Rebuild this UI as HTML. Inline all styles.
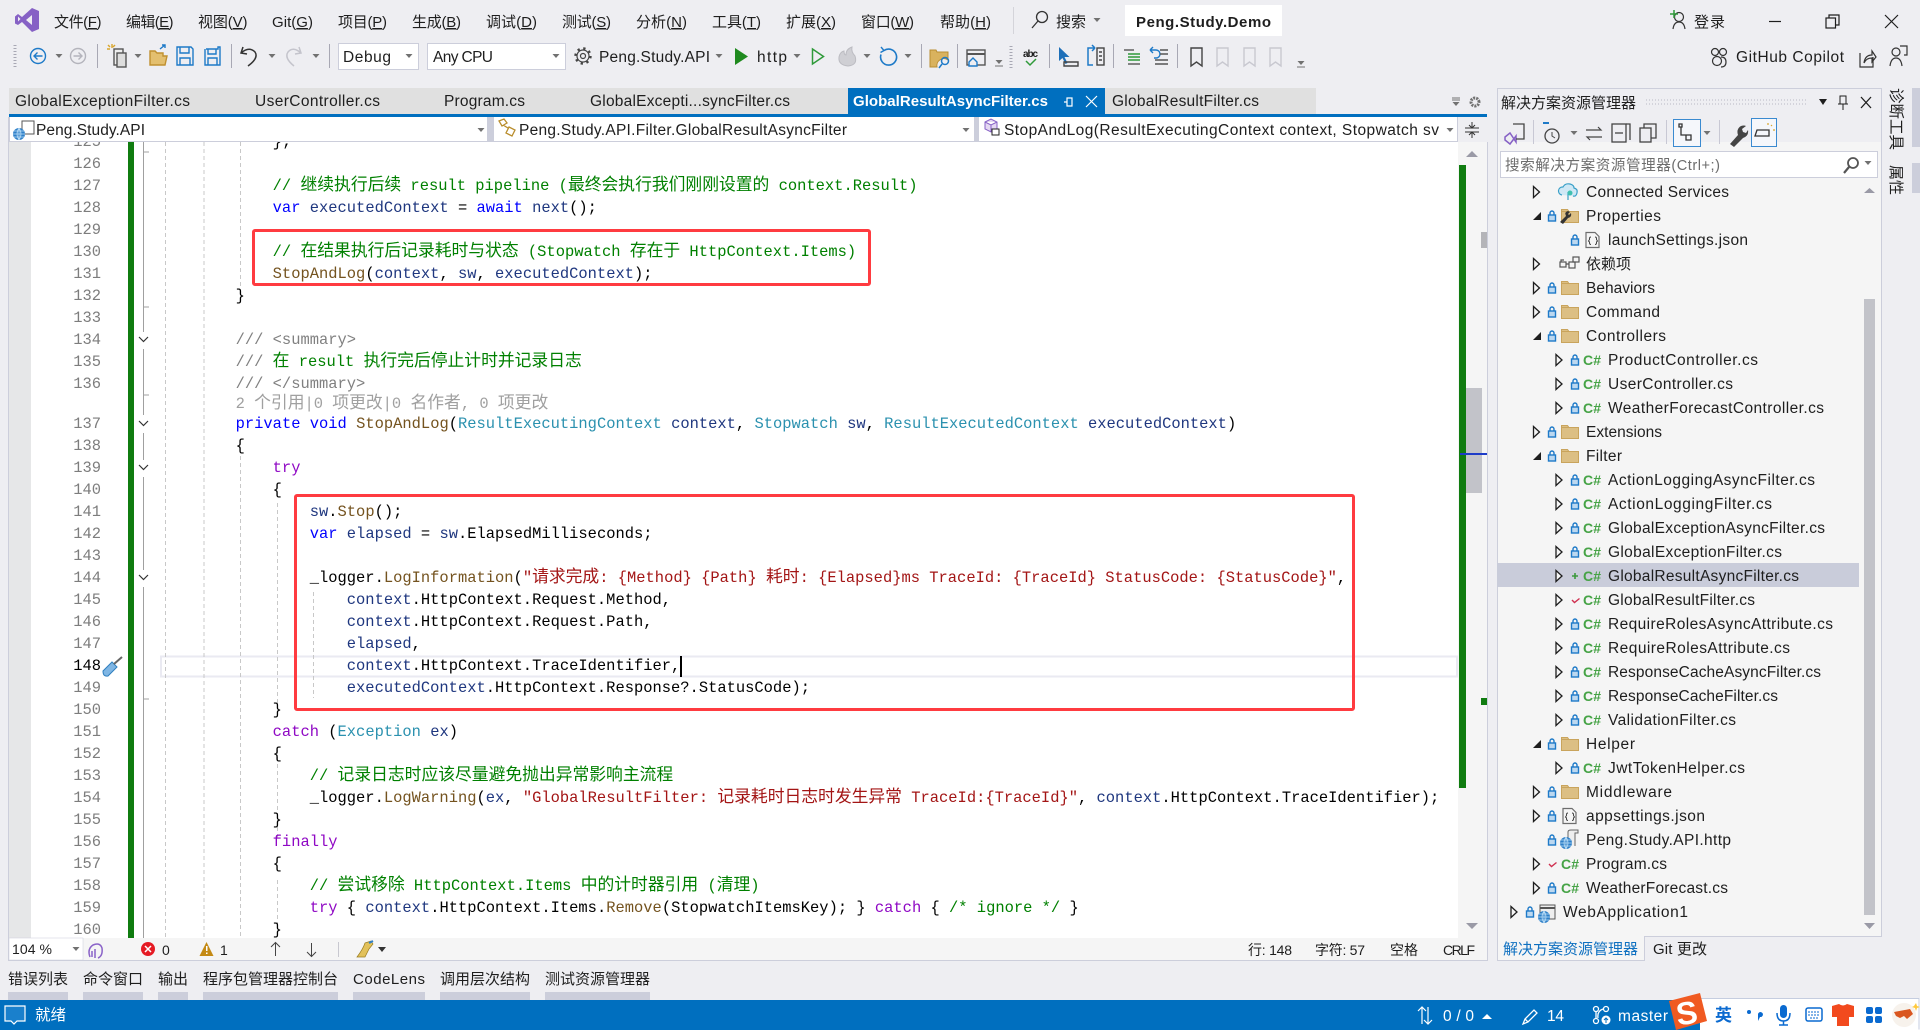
<!DOCTYPE html>
<html lang="zh-CN"><head><meta charset="utf-8"><title>Peng.Study.Demo</title>
<style>
html,body{margin:0;padding:0;width:1920px;height:1030px;overflow:hidden;background:#eeeef2}
svg{position:absolute;left:0;top:0}
svg text{font-family:"Liberation Sans","Noto Sans CJK SC",sans-serif;font-size:15.5px;fill:#1e1e1e;white-space:pre}
svg .z15 text{font-size:15px}
svg text.b{font-weight:700;font-size:15px}
svg text.g{fill:#6d6d6d}
svg text.w{fill:#fff}
svg text.cs{font-weight:700;font-size:14px;fill:#46a346}
svg .u{text-decoration:underline}
#code{position:absolute;left:0;top:0;width:1458px;height:938px;clip-path:inset(142px 0 0 0);font-family:"Liberation Mono",monospace;font-size:15.44px;line-height:22px;color:#000}
.l{position:absolute;left:161.5px;white-space:pre;height:22px}
.n{position:absolute;left:50px;width:51px;text-align:right;color:#7d7d7d;height:22px}
.l i{font-style:normal}
i.z{font-family:"Noto Sans CJK SC",sans-serif;font-size:16.8px;line-height:0}
.k{color:#0000ff}.c{color:#8f08c4}.t{color:#2b91af}.m{color:#74531f}.v{color:#1f377f}.s{color:#a31515}.o{color:#008000}.x{color:#808080}.q{color:#a0a0a0}
.box{position:absolute;border:3px solid #ff3b40;border-radius:3px;box-sizing:border-box}
</style></head><body>
<svg width="1920" height="1030" viewBox="0 0 1920 1030">
<defs>
<path id="cd" d="M-3.5-2h7L0 2z" fill="#717171"/>
<path id="ar" d="M-2.5-5.5 3.5 0-2.5 5.5z" fill="#f5f5f5" stroke="#1e1e1e" stroke-width="1.3"/>
<path id="ex" d="M-4 4H4V-4z" fill="#1e1e1e"/>
<g id="lk"><rect x="-3.5" y="-1" width="7" height="6" fill="#bcd8f0" stroke="#1e7ac8" stroke-width="1.4"/><path d="M-2-1v-2a2 2 0 0 1 4 0v2" fill="none" stroke="#1e7ac8" stroke-width="1.4"/></g>
<g id="fo"><path d="M-8.5-6.5h6l1.5 2h9.5v11h-17z" fill="#dcbf84" stroke="#c9a45c" stroke-width="1"/><path d="M-8.5-4.5h7.5" stroke="#c9a45c" fill="none"/></g>
<g id="js"><path d="M-7-7.5h9l4 4v11H-7z" fill="#f5f5f5" stroke="#6d6d6d" stroke-width="1.2"/><path d="M-2-3q-1.5 0-1.500 1.500v1L-4.500 1l1 1v1q0 1.500 1.500 1.500M2-3q1.500 0 1.500 1.500v1L4.500 1l-1 1v1q0 1.500-1.500 1.500" fill="none" stroke="#444" stroke-width="1"/></g>
<g id="gl"><circle r="6" fill="#2f80c8"/><path d="M-6 0H6M-5-3H5M-5 3H5M0-6V6M0-6Q-4 0 0 6M0-6Q4 0 0 6" stroke="#bfe0f8" stroke-width=".7" fill="none"/></g>
</defs>
<!-- title bar -->
<path fill-rule="evenodd" d="M32 8l7 3v18l-7 3-10-10-4 3-3-1.500v-7L18 14l4 3zM18 16.500v5l2.500-2.500zM32 15l-6 5 6 5z" fill="#8661c5"/>
<g class="z15">
<text x="54" y="27" textLength="47.500">文件(<tspan class="u">F</tspan>)</text>
<text x="126" y="27" textLength="47.500">编辑(<tspan class="u">E</tspan>)</text>
<text x="198" y="27" textLength="49.500">视图(<tspan class="u">V</tspan>)</text>
<text x="272" y="27" textLength="41">Git(<tspan class="u">G</tspan>)</text>
<text x="338" y="27" textLength="49">项目(<tspan class="u">P</tspan>)</text>
<text x="412" y="27" textLength="49">生成(<tspan class="u">B</tspan>)</text>
<text x="486" y="27" textLength="51">调试(<tspan class="u">D</tspan>)</text>
<text x="562" y="27" textLength="49">测试(<tspan class="u">S</tspan>)</text>
<text x="636" y="27" textLength="51">分析(<tspan class="u">N</tspan>)</text>
<text x="712" y="27" textLength="49">工具(<tspan class="u">T</tspan>)</text>
<text x="786" y="27" textLength="50">扩展(<tspan class="u">X</tspan>)</text>
<text x="861" y="27" textLength="53">窗口(<tspan class="u">W</tspan>)</text>
<text x="940" y="27" textLength="51">帮助(<tspan class="u">H</tspan>)</text>
<text x="1056" y="27" textLength="30">搜索</text>
<text x="1694" y="27" textLength="31">登录</text>
</g>
<rect x="1013" y="7" width="1" height="27" fill="#d4d4da"/>
<g fill="none" stroke="#333" stroke-width="1.300"><circle cx="1042" cy="17" r="5.500"/><path d="M1038 21l-6 7"/></g>
<use href="#cd" x="1097" y="20"/>
<rect x="1125" y="5" width="157" height="31" fill="#fff"/>
<text class="b" x="1136" y="27" textLength="135">Peng.Study.Demo</text>
<g fill="none" stroke="#333" stroke-width="1.200"><circle cx="1679" cy="17" r="4.500"/><path d="M1673 29q1-7 6-7t6 7"/></g>
<path d="M1670 14h8M1674 10v8" stroke="#2f9a3a" stroke-width="1.500"/>
<path d="M1769 21.500h12" stroke="#1e1e1e" stroke-width="1.200"/>
<g fill="none" stroke="#1e1e1e" stroke-width="1.200"><rect x="1826" y="18" width="9.500" height="10"/><path d="M1829 18v-3h10v10h-3.500"/><path d="M1885 15l13 13M1898 15l-13 13"/></g>
<!-- toolbar -->
<path d="M15 45v24" stroke="#a8a8b4" stroke-width="3" stroke-dasharray="1 2"/>
<g fill="none" stroke-width="1.400">
<circle cx="38" cy="56" r="7.500" stroke="#1e7ac8"/><path d="M42.500 56h-8M37.500 52.500 34 56l3.500 3.500" stroke="#1e7ac8"/>
<circle cx="78" cy="56" r="7.500" stroke="#b4b4bc"/><path d="M73.500 56h8M78.500 52.500 82 56l-3.500 3.500" stroke="#b4b4bc"/>
<rect x="114" y="49" width="9" height="16" stroke="#555" fill="#eee"/><rect x="117" y="53" width="9" height="14" stroke="#555" fill="#ddd"/>
<path d="M108 45l2 2m2-3v4m3-3-2 2m-6 2h3" stroke="#d8a52c"/>
<path d="M150 51v14h15l2-9h-4v-3h-6l-2-2z" stroke="#c09030" fill="#e3bf6f"/><path d="M160 49l5-4m-3 0h3v3" stroke="#1e7ac8"/>
<path d="M177 47h14l2 2v16h-16z" stroke="#1e7ac8"/><path d="M180 47v6h9v-6M180 65v-7h10v7" stroke="#1e7ac8"/>
<path d="M206 49h12v-2h2v18h-15V49" stroke="#1e7ac8"/><path d="M208 49v5h8v-5M208 65v-7h9v7" stroke="#1e7ac8"/>
<path d="M243 47l-2 6 6 1M241 53q8-7 14-1 4 6-7 14" stroke="#333" stroke-width="1.500"/>
<path d="M299 47l2 6-6 1M301 53q-8-7-13-1-4 6 6 14" stroke="#c4c4cc" stroke-width="1.500"/>
<circle cx="583" cy="56" r="6" stroke="#444" stroke-width="1.200"/><circle cx="583" cy="56" r="7.500" stroke="#444" stroke-width="2.400" stroke-dasharray="2.300 3.590"/><circle cx="583" cy="56" r="2.500" stroke="#444" stroke-width="1.200"/>
<path d="M812.500 49l11 7.500-11 7.500z" stroke="#2f9a3a" stroke-width="1.500"/>
<path d="M884 50.500a8 8 0 1 1-3 4" stroke="#1e7ac8" stroke-width="1.600"/><path d="M881 47l3 3.500-3.500 2" stroke="#1e7ac8"/>
<rect x="967" y="50" width="18" height="15" stroke="#555"/><path d="M967 54h18" stroke="#555" stroke-width="2"/>
<path d="M969 62l4-4 4 4v4h-8z" stroke="#1e7ac8" fill="#eeeef2"/>
<path d="M1026 61l4 4 6-6" stroke="#2f9a3a" stroke-width="1.500"/>
<path d="M1095 48h-7v17h5M1095 48l-3-3M1095 48l-3 3" stroke="#1e7ac8" stroke-width="1.500"/>
<rect x="1097" y="48" width="7" height="17" stroke="#444"/><path d="M1099 52h3M1099 56h3M1099 60h3" stroke="#444"/>
<path d="M1124 50h10" stroke="#555"/><path d="M1128 54h12M1128 57h12M1128 60h12" stroke="#2f9a3a"/><path d="M1128 64h12" stroke="#555"/>
<path d="M1150 50l3-3m-3 3l3 3m-3-3h6a4 4 0 0 1 0 8h-2" stroke="#1e7ac8"/><path d="M1160 50h8M1160 54h8M1155 60h13M1155 64h13" stroke="#555"/>
<path d="M1191 48h11v18l-5.500-4-5.500 4z" stroke="#444"/>
<path d="M1217 48h11v18l-5.500-4-5.500 4zM1244 48h11v18l-5.500-4-5.500 4zM1270 48h11v18l-5.500-4-5.500 4z" stroke="#c8c8d0"/>
</g>
<path d="M735 48l13 8.500-13 8.500z" fill="#1f8a1f"/>
<path d="M848 66q-10-1-9-9 1-5 5-6 0 4 2 4 0-6 6-8-1 5 3 9 3 9-7 10z" fill="#cfcfd4" stroke="#bcbcc2"/>
<path d="M930 50h6l1 2h11v8a7 7 0 0 0-11 7h-7z" fill="#d9b25e" stroke="#b98d32"/>
<circle cx="945" cy="61" r="3.500" fill="none" stroke="#1e7ac8" stroke-width="1.500"/><path d="M942 64l-3 4" stroke="#1e7ac8" stroke-width="1.500"/>
<path d="M1011 46v22" stroke="#a8a8b4" stroke-width="3" stroke-dasharray="1 2"/>
<path d="M1059 47v14l3.500-3 3 6 2-1-3-6h5z" fill="#1e6fb8"/><path d="M1064 62h14v4h-14z" fill="none" stroke="#444" stroke-width="1.400"/>
<text x="1023" y="57" style="font-size:10px;font-weight:700" textLength="15">abc</text>
<g fill="#a8a8b4"><rect x="97" y="44" width="1" height="24"/><rect x="231" y="44" width="1" height="24"/><rect x="329" y="44" width="1" height="24"/><rect x="921" y="44" width="1" height="24"/><rect x="957" y="44" width="1" height="24"/><rect x="1049" y="44" width="1" height="24"/><rect x="1113" y="44" width="1" height="24"/><rect x="1177" y="44" width="1" height="24"/></g>
<use href="#cd" x="59" y="56"/><use href="#cd" x="138" y="56"/><use href="#cd" x="272" y="56"/><use href="#cd" x="316" y="56"/><use href="#cd" x="719" y="56"/><use href="#cd" x="797" y="56"/><use href="#cd" x="867" y="56"/><use href="#cd" x="908" y="56"/><use href="#cd" x="999" y="62"/><use href="#cd" x="1301" y="63"/>
<path d="M995 66h8M1297 67h8" stroke="#717171"/>
<rect x="338.500" y="43.500" width="80" height="26" fill="#fff" stroke="#cccedb"/>
<rect x="427.500" y="43.500" width="138" height="26" fill="#fff" stroke="#cccedb"/>
<text x="343" y="62" textLength="48">Debug</text><text x="433" y="62" textLength="60">Any CPU</text>
<use href="#cd" x="409" y="56"/><use href="#cd" x="556" y="56"/>
<text x="599" y="62" textLength="111">Peng.Study.API</text><text x="757" y="62" textLength="30">http</text>
<g fill="none" stroke="#333" stroke-width="1.200"><circle cx="1715" cy="52" r="3.500"/><circle cx="1723" cy="52" r="3.500"/><circle cx="1717" cy="61" r="4.500"/><path d="M1721 57q5 0 5 5t-5 5"/></g>
<text x="1736" y="62" textLength="108">GitHub Copilot</text>
<g fill="none" stroke="#333" stroke-width="1.200"><path d="M1860 53v14h13V57M1864 63q1-8 8-8v-4l4 6-4 5v-4q-6 0-8 5z"/><circle cx="1896" cy="52" r="4"/><path d="M1890 66q1-8 6-8t6 8"/><path d="M1900 46h7v9h-3"/></g>
<!-- tabs -->
<rect x="9" y="88" width="1307" height="26" fill="#e0e0e0"/>
<rect x="9" y="114" width="1478" height="3" fill="#006fbf"/>
<rect x="848" y="88" width="257" height="26" fill="#006fbf"/>
<text x="15" y="106" textLength="175">GlobalExceptionFilter.cs</text>
<text x="255" y="106" textLength="125">UserController.cs</text>
<text x="444" y="106" textLength="81">Program.cs</text>
<text x="590" y="106" textLength="200">GlobalExcepti...syncFilter.cs</text>
<text class="b w" x="853" y="106" textLength="195">GlobalResultAsyncFilter.cs</text>
<text x="1112" y="106" textLength="147">GlobalResultFilter.cs</text>
<path d="M1064 102h3M1067 98v8h5v-8zM1086 96l11 11M1097 96l-11 11" stroke="#fff" stroke-width="1.200" fill="none"/>
<path d="M1452 98h8M1452 100h8" stroke="#717171"/><use href="#cd" x="1456" y="104"/>
<path d="M1479 102a4 4 0 1 0 0 .01" fill="none" stroke="#717171" stroke-width="3" stroke-dasharray="2 1"/>
<!-- nav -->
<rect x="8" y="117" width="1479" height="25" fill="#cccedb"/>
<rect x="10" y="117" width="477" height="24" fill="#fff"/><rect x="494" y="117" width="480" height="24" fill="#fff"/><rect x="979" y="117" width="478" height="24" fill="#fff"/><rect x="1458" y="117" width="29" height="25" fill="#eeeef2"/>
<text x="36" y="135" textLength="109">Peng.Study.API</text>
<text x="519" y="135" textLength="328">Peng.Study.API.Filter.GlobalResultAsyncFilter</text>
<text x="1004" y="135" textLength="435">StopAndLog(ResultExecutingContext context, Stopwatch sv</text>
<use href="#cd" x="481" y="130"/><use href="#cd" x="966" y="130"/><use href="#cd" x="1450" y="130"/>
<rect x="22" y="121" width="12" height="13" fill="none" stroke="#555"/><use href="#gl" x="19" y="134"/>
<g fill="none" stroke="#b98d2c" stroke-width="1.300"><path d="M499 121l5-2 3 4-5 3zM509 127l6 3-3 6-6-3zM503 125l5 3"/></g>
<path d="M985 122l6-3 6 3v7l-6 3-6-3zM985 122l6 3 6-3M991 125v7" fill="#e4d8f2" stroke="#8661c5"/><rect x="992" y="129" width="7" height="6" fill="#fff" stroke="#222"/>
<path d="M1472 122v6M1472 138v-6M1465 128h14M1465 132h14M1469 125l3 3 3-3M1469 135l3-3 3 3" stroke="#333" fill="none"/>
<!-- editor -->
<rect x="8" y="142" width="1450" height="796" fill="#fff"/>
<rect x="8" y="142" width="23" height="796" fill="#e6e7e8"/>
<rect x="128" y="142" width="6" height="796" fill="#107c10"/>
<rect x="1458" y="142" width="29" height="796" fill="#f5f5f5"/>
<rect x="1459" y="165" width="7" height="623" fill="#107c10"/>
<rect x="1466" y="388" width="16" height="105" fill="#c2c3c9"/>
<rect x="1481" y="232" width="6" height="16" fill="#b4b4b8"/>
<rect x="1460" y="453" width="27" height="2" fill="#1e3cc8"/>
<rect x="1481" y="698" width="6" height="7" fill="#107c10"/>
<path d="M1466 157l6-6 6 6zM1466 923h12l-6 6z" fill="#9a9aa6"/>
<rect x="161" y="656.500" width="1296" height="20" fill="none" stroke="#eaeaf2" stroke-width="2"/>
<g stroke="#c8c8c8" stroke-dasharray="4 3"><path d="M165.500 142V938M204 142V938M240.500 142V286M240.500 456V938M277.500 503V706M277.500 750V840M277.500 880V925M313.500 592V698"/></g>
<g stroke="#a0a0a0" fill="none"><path d="M143.500 142V332M143.500 349V415M143.500 433V460M143.500 477V570M143.500 587V938M143 152h6M143 307h6M143 395h6M143 699h6"/>
<path d="M139 337l4.500 4.500L148 337M139 421l4.500 4.500L148 421M139 465l4.500 4.500L148 465M139 575l4.500 4.500L148 575" stroke="#333" stroke-width="1.200"/></g>
<g><path d="M103 671l9-9 5 5-9 9q-5 1-5-5z" fill="#7fb6e4" stroke="#2f7fbf"/><path d="M114 664l8-7" stroke="#666" stroke-width="2"/></g>
<!-- editor status -->
<rect x="8" y="938" width="1479" height="22" fill="#f5f5f5"/>
<rect x="9" y="938" width="74" height="22" fill="#fff" stroke="#cccedb" stroke-width=".5"/>
<text x="12" y="954" textLength="40" style="font-size:14px">104 %</text><use href="#cd" x="76" y="949"/>
<path d="M90 957q-3-8 3-12 7-3 9 3 1 8-4 10M92 957v-6M95 958v-9" stroke="#8a63c8" fill="none" stroke-width="1.500"/>
<circle cx="148" cy="949" r="7" fill="#e51b24"/><path d="M145 946l6 6M151 946l-6 6" stroke="#fff" stroke-width="1.500"/>
<text x="162" y="955" style="font-size:14px">0</text>
<path d="M206.500 942l7 14h-14z" fill="#c48a14"/><rect x="206" y="946" width="1.500" height="5" fill="#fff"/><rect x="206" y="952.500" width="1.500" height="1.500" fill="#fff"/>
<text x="220" y="955" style="font-size:14px">1</text>
<path d="M275.500 956v-13M271 947l4.500-4.500 4.500 4.500M311.500 943v13M307 952l4.500 4.500 4.500-4.500" stroke="#444" fill="none"/>
<rect x="338" y="942" width="1" height="15" fill="#c8c8d0"/>
<path d="M365 943l6-2 2 3-4 5-4 8h-8q6-8 8-14z" fill="#e2c15a" stroke="#9a7d20" stroke-width=".7"/><path d="M369 943l4-2" stroke="#2f80c8" stroke-width="2"/>
<path d="M378 947h8l-4 5z" fill="#333"/>
<g><text x="1248" y="955" textLength="44" style="font-size:14px">行: 148</text><text x="1315" y="955" textLength="50" style="font-size:14px">字符: 57</text><text x="1390" y="955" style="font-size:14px">空格</text><text x="1443" y="955" textLength="32" style="font-size:14px">CRLF</text></g>
<path d="M8.500 142V960.500H1487.500V142" fill="none" stroke="#cccedb"/>
<!-- bottom tabs -->
<g fill="#cccedb"><rect x="8" y="992" width="60" height="8"/><rect x="83" y="992" width="60" height="8"/><rect x="158" y="992" width="30" height="8"/><rect x="203" y="992" width="135" height="8"/><rect x="353" y="992" width="72" height="8"/><rect x="440" y="992" width="90" height="8"/><rect x="545" y="992" width="105" height="8"/></g>
<g class="z15"><text x="8" y="984">错误列表</text><text x="83" y="984">命令窗口</text><text x="158" y="984">输出</text><text x="203" y="984">程序包管理器控制台</text><text x="353" y="984" textLength="72">CodeLens</text><text x="440" y="984">调用层次结构</text><text x="545" y="984">测试资源管理器</text></g>
<!-- status bar -->
<rect x="0" y="1000" width="1920" height="30" fill="#006fbf"/>
<path d="M5 1006h20v15h-8l-3 3-3-3H5z" fill="#1a80cc" stroke="#fff" stroke-width="1.200"/>
<text class="w" x="35" y="1020" textLength="31">就绪</text>
<path d="M1422 1024v-17M1418 1011l4-4 4 4M1428 1007v17M1424 1020l4 4 4-4" stroke="#fff" fill="none" stroke-width="1.200"/>
<text class="w" x="1443" y="1021" textLength="31">0 / 0</text>
<path d="M1482 1019l5-5 5 5z" fill="#fff"/>
<path d="M1523 1024l2-5 9-9 3 3-9 9zM1525 1019l3 3" fill="none" stroke="#fff" stroke-width="1.300"/>
<text class="w" x="1547" y="1021" textLength="17">14</text>
<g fill="none" stroke="#fff" stroke-width="1.300"><circle cx="1596" cy="1009" r="2.500"/><circle cx="1596" cy="1021" r="2.500"/><circle cx="1606" cy="1009" r="2.500"/><path d="M1596 1012v6M1603 1009q-6 2-5 9"/></g>
<circle cx="1606" cy="1020" r="4.500" fill="#fff"/><path d="M1606 1023v-5M1604 1020l2-2 2 2" stroke="#006fbf" fill="none"/>
<text class="w" x="1618" y="1021" textLength="50">master</text>
<!-- IME -->
<rect x="1700" y="998" width="220" height="32" fill="#fff"/><path d="M1700 998.500h219v31" fill="none" stroke="#c5cde0"/>
<path d="M1669 1001l31-8 7 28-31 9z" fill="#f05a22"/>
<text x="1676" y="1024" transform="rotate(-8 1688 1012)" style="font-size:32px;font-weight:700;fill:#fff">S</text>
<text x="1715" y="1021" style="font-size:17px;font-weight:700;fill:#0a6ad0">英</text>
<circle cx="1749" cy="1012" r="2" fill="#0a6ad0"/><path d="M1758 1014a2.500 2.500 0 1 1 2 3l-2 4" fill="#0a6ad0"/>
<rect x="1780" y="1005" width="7" height="13" rx="3.500" fill="#0a6ad0"/><path d="M1777 1013q0 8 6.500 8t6.500-8M1783.500 1021v4M1779 1025h9" fill="none" stroke="#0a6ad0" stroke-width="1.500"/>
<rect x="1806" y="1008" width="16" height="13" rx="2" fill="none" stroke="#0a6ad0" stroke-width="1.500"/><path d="M1808 1012h12M1808 1015h12M1810 1018h8" stroke="#0a6ad0" stroke-dasharray="2 1"/>
<path d="M1832 1006l7-2q4 3 8 0l7 2v11h-5v9h-12v-9h-5z" fill="#f24a1e"/>
<g fill="#0a6ad0"><rect x="1866" y="1007" width="7" height="7" rx="2"/><rect x="1875" y="1007" width="7" height="7" rx="2"/><rect x="1866" y="1016" width="7" height="7" rx="2"/><rect x="1875" y="1016" width="7" height="7" rx="2"/></g>
<circle cx="1904" cy="1015" r="12" fill="#f7f2ec"/><path d="M1894 1012l16-3 3 5-6 5-3-3-4 2-4-2z" fill="#d9561f"/><path d="M1914 1006l2-3 1 3 3 1-3 1-1 3-1-3-3-1z" fill="#ffc93c"/>
<!-- solution explorer -->
<rect x="1497" y="88" width="384" height="848" fill="#eeeef2"/>
<rect x="1497" y="142" width="384" height="794" fill="#f5f5f5"/>
<rect x="1497.500" y="88.500" width="384" height="848" fill="none" stroke="#cccedb"/>
<text x="1501" y="108" style="font-size:15px">解决方案资源管理器</text>
<path d="M1646 100h161M1646 104h161" stroke="#b8b8c4" stroke-dasharray="1 2"/>
<path d="M1819 99h8l-4 6z" fill="#1e1e1e"/><path d="M1840 96h6v8h-6zM1838 104h10M1843 104v6" fill="none" stroke="#1e1e1e"/><path d="M1861 97l10 11M1871 97l-10 11" stroke="#1e1e1e" stroke-width="1.300"/>
<g fill="#c8c8d4"><rect x="1533" y="120" width="1" height="24"/><rect x="1666" y="120" width="1" height="24"/><rect x="1719" y="120" width="1" height="24"/></g>
<path d="M1505 137l5-4 6 9v-6l-6 8-5-4z" fill="none" stroke="#8661c5" stroke-width="1.500"/><path d="M1513 124h11v15h-8" fill="none" stroke="#444" stroke-width="1.300"/>
<circle cx="1552" cy="136" r="7" fill="none" stroke="#444" stroke-width="1.300"/><path d="M1552 132v4l3 2" stroke="#444" fill="none"/><path d="M1543 122h6v2h-6z" fill="#1e7ac8"/>
<use href="#cd" x="1574" y="133"/><use href="#cd" x="1707" y="133"/>
<path d="M1586 130h15l-3-3M1602 137h-15l3 3" fill="none" stroke="#444" stroke-width="1.200"/>
<g fill="none" stroke="#444" stroke-width="1.300"><rect x="1612" y="124" width="14" height="18"/><path d="M1626 124h4v16"/><path d="M1615 133h8"/><rect x="1640" y="128" width="11" height="14"/><path d="M1644 128v-4h12v14h-5"/></g>
<rect x="1673.500" y="119.500" width="27" height="27" fill="#f5f7fb" stroke="#3a8ad0"/><path d="M1679 124h3v3h-3zM1686 135h5v5h-5zM1681 127v8h5" fill="none" stroke="#333" stroke-width="1.300"/>
<path d="M1730 144l8-9q-2-6 3-9 3-1 5 0l-4 3 1 3 3 1 2-3q1 6-5 8l-9 9z" fill="#444"/>
<rect x="1751.500" y="118.500" width="25" height="28" fill="#f5f7fb" stroke="#3a8ad0"/><path d="M1757 130h12v6h-14l2-6z" fill="none" stroke="#333" stroke-width="1.300"/><path d="M1771 125l1 1M1773 130h2M1768 123v2" stroke="#d8a52c" stroke-width="1.200"/>
<rect x="1500.500" y="151.500" width="377" height="26" fill="#fff" stroke="#cccedb"/>
<text class="g" x="1505" y="170" textLength="215" style="font-size:14.600px">搜索解决方案资源管理器(Ctrl+;)</text>
<circle cx="1853" cy="163" r="5" fill="none" stroke="#555" stroke-width="1.800"/><path d="M1849 167l-5 6" stroke="#555" stroke-width="2.200"/><use href="#cd" x="1868" y="163"/>
<rect x="1497" y="563" width="362" height="24" fill="#c9ccda"/>
<rect x="1864" y="299" width="11" height="616" fill="#c2c3c9"/>
<path d="M1864 193l5.500-5 5.500 5zM1864 923h11l-5.500 6z" fill="#9a9aa6"/>
<!-- tree arrows -->
<use href="#ar" x="1536" y="192"/><use href="#ex" x="1537" y="216"/><use href="#ar" x="1536" y="264"/><use href="#ar" x="1536" y="288"/><use href="#ar" x="1536" y="312"/><use href="#ex" x="1537" y="336"/><use href="#ar" x="1558.500" y="360"/><use href="#ar" x="1558.500" y="384"/><use href="#ar" x="1558.500" y="408"/><use href="#ar" x="1536" y="432"/><use href="#ex" x="1537" y="456"/>
<use href="#ar" x="1558.500" y="480"/><use href="#ar" x="1558.500" y="504"/><use href="#ar" x="1558.500" y="528"/><use href="#ar" x="1558.500" y="552"/><use href="#ar" x="1558.500" y="576"/><use href="#ar" x="1558.500" y="600"/><use href="#ar" x="1558.500" y="624"/><use href="#ar" x="1558.500" y="648"/><use href="#ar" x="1558.500" y="672"/><use href="#ar" x="1558.500" y="696"/><use href="#ar" x="1558.500" y="720"/><use href="#ex" x="1537" y="744"/><use href="#ar" x="1558.500" y="768"/><use href="#ar" x="1536" y="792"/><use href="#ar" x="1536" y="816"/><use href="#ar" x="1536" y="864"/><use href="#ar" x="1536" y="888"/><use href="#ar" x="1513.500" y="912"/>
<!-- tree locks -->
<use href="#lk" x="1552" y="216"/><use href="#lk" x="1575" y="240"/><use href="#lk" x="1552" y="288"/><use href="#lk" x="1552" y="312"/><use href="#lk" x="1552" y="336"/><use href="#lk" x="1575" y="360"/><use href="#lk" x="1575" y="384"/><use href="#lk" x="1575" y="408"/><use href="#lk" x="1552" y="432"/><use href="#lk" x="1552" y="456"/><use href="#lk" x="1575" y="480"/><use href="#lk" x="1575" y="504"/><use href="#lk" x="1575" y="528"/><use href="#lk" x="1575" y="552"/><use href="#lk" x="1575" y="624"/><use href="#lk" x="1575" y="648"/><use href="#lk" x="1575" y="672"/><use href="#lk" x="1575" y="696"/><use href="#lk" x="1575" y="720"/><use href="#lk" x="1552" y="744"/><use href="#lk" x="1575" y="768"/><use href="#lk" x="1552" y="792"/><use href="#lk" x="1552" y="816"/><use href="#lk" x="1552" y="840"/><use href="#lk" x="1552" y="888"/><use href="#lk" x="1530" y="912"/>
<path d="M1572 576h6M1575 573v6" stroke="#3c9a3c" stroke-width="1.600"/>
<path d="M1572 600l2.500 2.500 5-4M1549 864l2.500 2.500 5-4" fill="none" stroke="#d03050" stroke-width="1.400"/>
<!-- folders -->
<use href="#fo" x="1570" y="216"/><use href="#fo" x="1570" y="288"/><use href="#fo" x="1570" y="312"/><use href="#fo" x="1570" y="336"/><use href="#fo" x="1570" y="432"/><use href="#fo" x="1570" y="456"/><use href="#fo" x="1570" y="744"/><use href="#fo" x="1570" y="792"/>
<path d="M1560 222l6-6q-2-4 2-5l2 1-2 2 1 1 2-2q1 4-3 5l-5 6z" fill="#333"/>
<path d="M1562 195a4 4 0 0 1 1-8q2-4 7-3 4 1 4 4 4 1 3 5t-4 3M1568 192v8" fill="#cfe8f5" stroke="#3aa0c8" stroke-width="1.200"/><circle cx="1570" cy="193" r="2.500" fill="#40c0b0"/>
<use href="#js" x="1593" y="240"/><use href="#js" x="1570" y="816"/>
<g fill="none" stroke="#555" stroke-width="1.200"><rect x="1560" y="262" width="6" height="5"/><rect x="1569" y="262" width="6" height="6"/><rect x="1573" y="257" width="6" height="5"/><path d="M1566 264h3M1561 262v-2h3"/></g>
<path d="M1568 843v-11q0-2 3-2h7v3h-3v13" fill="#eee" stroke="#666"/><use href="#gl" x="1566" y="843"/>
<rect x="1540" y="905" width="15" height="14" fill="#eee" stroke="#555"/><path d="M1540 908h15" stroke="#555" stroke-width="2"/><use href="#gl" x="1544" y="917"/>
<!-- C# -->
<g><text class="cs" x="1583" y="365" textLength="18">C#</text><text class="cs" x="1583" y="389" textLength="18">C#</text><text class="cs" x="1583" y="413" textLength="18">C#</text>
<text class="cs" x="1583" y="485" textLength="18">C#</text><text class="cs" x="1583" y="509" textLength="18">C#</text><text class="cs" x="1583" y="533" textLength="18">C#</text><text class="cs" x="1583" y="557" textLength="18">C#</text><text class="cs" x="1583" y="581" textLength="18">C#</text><text class="cs" x="1583" y="605" textLength="18">C#</text><text class="cs" x="1583" y="629" textLength="18">C#</text><text class="cs" x="1583" y="653" textLength="18">C#</text><text class="cs" x="1583" y="677" textLength="18">C#</text><text class="cs" x="1583" y="701" textLength="18">C#</text><text class="cs" x="1583" y="725" textLength="18">C#</text><text class="cs" x="1583" y="773" textLength="18">C#</text><text class="cs" x="1561" y="869" textLength="18">C#</text><text class="cs" x="1561" y="893" textLength="18">C#</text></g>
<!-- tree labels -->
<g>
<text x="1586" y="197" textLength="143">Connected Services</text>
<text x="1586" y="221" textLength="75">Properties</text>
<text x="1608" y="245" textLength="140">launchSettings.json</text>
<text x="1586" y="269" style="font-size:15px">依赖项</text>
<text x="1586" y="293" textLength="69">Behaviors</text>
<text x="1586" y="317" textLength="74">Command</text>
<text x="1586" y="341" textLength="80">Controllers</text>
<text x="1608" y="365" textLength="150">ProductController.cs</text>
<text x="1608" y="389" textLength="125">UserController.cs</text>
<text x="1608" y="413" textLength="216">WeatherForecastController.cs</text>
<text x="1586" y="437" textLength="76">Extensions</text>
<text x="1586" y="461" textLength="36">Filter</text>
<text x="1608" y="485" textLength="207">ActionLoggingAsyncFilter.cs</text>
<text x="1608" y="509" textLength="164">ActionLoggingFilter.cs</text>
<text x="1608" y="533" textLength="217">GlobalExceptionAsyncFilter.cs</text>
<text x="1608" y="557" textLength="174">GlobalExceptionFilter.cs</text>
<text x="1608" y="581" textLength="191">GlobalResultAsyncFilter.cs</text>
<text x="1608" y="605" textLength="147">GlobalResultFilter.cs</text>
<text x="1608" y="629" textLength="225">RequireRolesAsyncAttribute.cs</text>
<text x="1608" y="653" textLength="182">RequireRolesAttribute.cs</text>
<text x="1608" y="677" textLength="213">ResponseCacheAsyncFilter.cs</text>
<text x="1608" y="701" textLength="170">ResponseCacheFilter.cs</text>
<text x="1608" y="725" textLength="128">ValidationFilter.cs</text>
<text x="1586" y="749" textLength="49">Helper</text>
<text x="1608" y="773" textLength="137">JwtTokenHelper.cs</text>
<text x="1586" y="797" textLength="86">Middleware</text>
<text x="1586" y="821" textLength="119">appsettings.json</text>
<text x="1586" y="845" textLength="145">Peng.Study.API.http</text>
<text x="1586" y="869" textLength="81">Program.cs</text>
<text x="1586" y="893" textLength="142">WeatherForecast.cs</text>
<text x="1563" y="917" textLength="125">WebApplication1</text>
</g>
<!-- panel bottom tabs -->
<path d="M1497.500 936v24.500H1644.500V936" fill="#f5f5f5" stroke="#cccedb"/>
<rect x="1498" y="934" width="146" height="3" fill="#f5f5f5"/>
<text x="1503" y="954" style="fill:#0e70c0;font-size:15px">解决方案资源管理器</text>
<text x="1653" y="954" textLength="54" style="font-size:15px">Git 更改</text>
<!-- right strip -->
<rect x="1912" y="88" width="8" height="59" fill="#cccedb"/><rect x="1912" y="163" width="8" height="30" fill="#cccedb"/>
<text x="1892" y="88" transform="rotate(90 1892 88)" style="font-size:15.500px" dy="1">诊断工具</text>
<text x="1892" y="165" transform="rotate(90 1892 165)" style="font-size:15px" dy="1">属性</text>
</svg>
<div id="code">
<div class="n" style="top:131px">125</div><div class="n" style="top:153px">126</div><div class="n" style="top:175px">127</div><div class="n" style="top:197px">128</div><div class="n" style="top:219px">129</div><div class="n" style="top:241px">130</div><div class="n" style="top:263px">131</div><div class="n" style="top:285px">132</div><div class="n" style="top:307px">133</div><div class="n" style="top:329px">134</div><div class="n" style="top:351px">135</div><div class="n" style="top:373px">136</div><div class="n" style="top:413px">137</div><div class="n" style="top:435px">138</div><div class="n" style="top:457px">139</div><div class="n" style="top:479px">140</div><div class="n" style="top:501px">141</div><div class="n" style="top:523px">142</div><div class="n" style="top:545px">143</div><div class="n" style="top:567px">144</div><div class="n" style="top:589px">145</div><div class="n" style="top:611px">146</div><div class="n" style="top:633px">147</div><div class="n" style="top:655px;color:#000">148</div><div class="n" style="top:677px">149</div><div class="n" style="top:699px">150</div><div class="n" style="top:721px">151</div><div class="n" style="top:743px">152</div><div class="n" style="top:765px">153</div><div class="n" style="top:787px">154</div><div class="n" style="top:809px">155</div><div class="n" style="top:831px">156</div><div class="n" style="top:853px">157</div><div class="n" style="top:875px">158</div><div class="n" style="top:897px">159</div><div class="n" style="top:919px">160</div>
<div class="l" style="top:131px">            };</div>
<div class="l o" style="top:175px">            // <i class="z">继续执行后续</i> result pipeline (<i class="z">最终会执行我们刚刚设置的</i> context.Result)</div>
<div class="l" style="top:197px">            <i class="k">var</i> <i class="v">executedContext</i> = <i class="k">await</i> <i class="v">next</i>();</div>
<div class="l o" style="top:241px">            // <i class="z">在结果执行后记录耗时与状态</i> (Stopwatch <i class="z">存在于</i> HttpContext.Items)</div>
<div class="l" style="top:263px">            <i class="m">StopAndLog</i>(<i class="v">context</i>, <i class="v">sw</i>, <i class="v">executedContext</i>);</div>
<div class="l" style="top:285px">        }</div>
<div class="l x" style="top:329px">        /// &lt;summary&gt;</div>
<div class="l o" style="top:351px"><i class="x">        /// </i><i class="z">在</i> result <i class="z">执行完后停止计时并记录日志</i></div>
<div class="l x" style="top:373px">        /// &lt;/summary&gt;</div>
<div class="l q" style="top:393px">        2 <i class="z">个引用</i>|0 <i class="z">项更改</i>|0 <i class="z">名作者</i>, 0 <i class="z">项更改</i></div>
<div class="l" style="top:413px">        <i class="k">private</i> <i class="k">void</i> <i class="m">StopAndLog</i>(<i class="t">ResultExecutingContext</i> <i class="v">context</i>, <i class="t">Stopwatch</i> <i class="v">sw</i>, <i class="t">ResultExecutedContext</i> <i class="v">executedContext</i>)</div>
<div class="l" style="top:435px">        {</div>
<div class="l c" style="top:457px">            try</div>
<div class="l" style="top:479px">            {</div>
<div class="l" style="top:501px">                <i class="v">sw</i>.<i class="m">Stop</i>();</div>
<div class="l" style="top:523px">                <i class="k">var</i> <i class="v">elapsed</i> = <i class="v">sw</i>.ElapsedMilliseconds;</div>
<div class="l" style="top:567px">                _logger.<i class="m">LogInformation</i>(<i class="s">"<i class="z">请求完成</i>: {Method} {Path} <i class="z">耗时</i>: {Elapsed}ms TraceId: {TraceId} StatusCode: {StatusCode}"</i>,</div>
<div class="l" style="top:589px">                    <i class="v">context</i>.HttpContext.Request.Method,</div>
<div class="l" style="top:611px">                    <i class="v">context</i>.HttpContext.Request.Path,</div>
<div class="l" style="top:633px">                    <i class="v">elapsed</i>,</div>
<div class="l" style="top:655px">                    <i class="v">context</i>.HttpContext.TraceIdentifier,</div>
<div class="l" style="top:677px">                    <i class="v">executedContext</i>.HttpContext.Response?.StatusCode);</div>
<div class="l" style="top:699px">            }</div>
<div class="l" style="top:721px">            <i class="c">catch</i> (<i class="t">Exception</i> <i class="v">ex</i>)</div>
<div class="l" style="top:743px">            {</div>
<div class="l o" style="top:765px">                // <i class="z">记录日志时应该尽量避免抛出异常影响主流程</i></div>
<div class="l" style="top:787px">                _logger.<i class="m">LogWarning</i>(<i class="v">ex</i>, <i class="s">"GlobalResultFilter: <i class="z">记录耗时日志时发生异常</i> TraceId:{TraceId}"</i>, <i class="v">context</i>.HttpContext.TraceIdentifier);</div>
<div class="l" style="top:809px">            }</div>
<div class="l c" style="top:831px">            finally</div>
<div class="l" style="top:853px">            {</div>
<div class="l o" style="top:875px">                // <i class="z">尝试移除</i> HttpContext.Items <i class="z">中的计时器引用</i> (<i class="z">清理</i>)</div>
<div class="l" style="top:897px">                <i class="c">try</i> { <i class="v">context</i>.HttpContext.Items.<i class="m">Remove</i>(StopwatchItemsKey); } <i class="c">catch</i> { <i class="o">/* ignore */</i> }</div>
<div class="l" style="top:919px">            }</div>
<div style="position:absolute;left:680px;top:656px;width:1.500px;height:21px;background:#000"></div>
</div>
<div class="box" style="left:252px;top:229px;width:619px;height:57px"></div>
<div class="box" style="left:294px;top:494px;width:1061px;height:217px"></div>
</body></html>
